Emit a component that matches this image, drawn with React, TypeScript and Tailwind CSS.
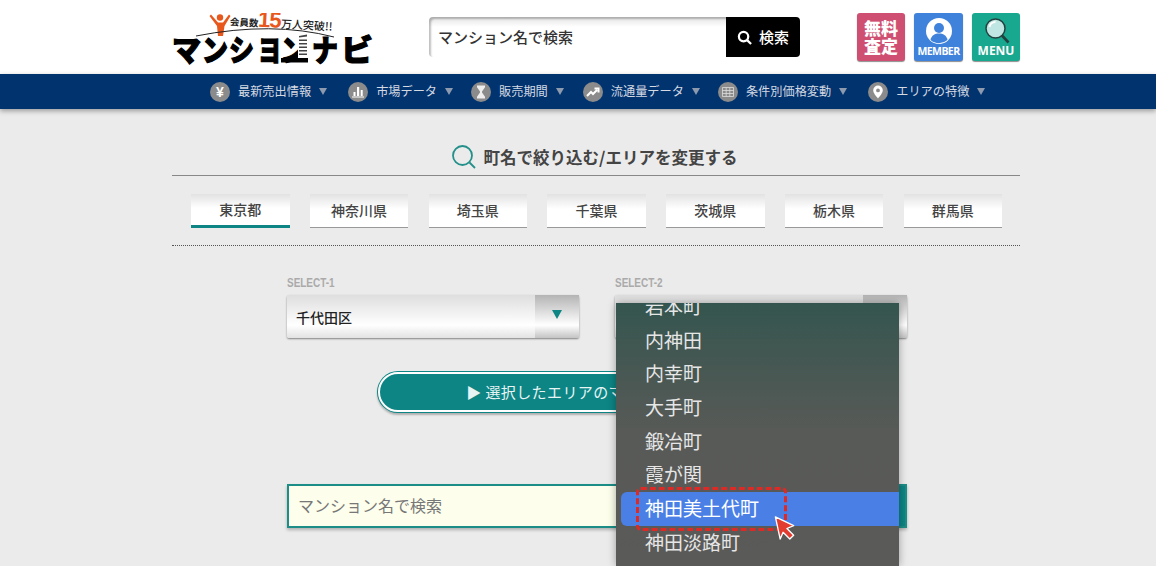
const jp = "font-['Noto_Sans_CJK_JP','Noto_Sans',sans-serif]";

const Glyph = ({ children }: { children: React.ReactNode }) => (
  <svg viewBox="0 0 20 20" className="size-5 shrink-0 rounded-full bg-[#8b8b8b]">
    {children}
  </svg>
);

const navItems = [
  {
    label: "最新売出情報",
    gap: "mr-[21px]",
    icon: (
      <text x="10" y="15" textAnchor="middle" fontSize="14" fontWeight="700" fill="#fff" fontFamily="Liberation Sans">
        ¥
      </text>
    ),
  },
  {
    label: "市場データ",
    gap: "mr-[18px]",
    icon: <path d="M4 14.500h12v1H4zM5.500 10h2v4h-2zM9 5h2.200v9H9zM12.700 8h2v6h-2z" fill="#fff" />,
  },
  {
    label: "販売期間",
    gap: "mr-[19px]",
    icon: <path d="M6 3.500h8v1.700l-3 4.300v1l3 4.300v1.700H6v-1.700l3-4.300v-1l-3-4.300z" fill="#eee" />,
  },
  {
    label: "流通量データ",
    gap: "mr-[18px]",
    icon: <path d="M4 14l4-4 2 2 4-4M11.500 6.500H15.500V10.500" stroke="#fff" strokeWidth="2" fill="none" />,
  },
  {
    label: "条件別価格変動",
    gap: "mr-[21px]",
    icon: (
      <path
        d="M4.500 5.500h11v9h-11zM4.500 8.500h11M4.500 11.500h11M8.200 5.500v9M11.800 5.500v9"
        stroke="#ddd"
        strokeWidth="0.8"
        fill="none"
      />
    ),
  },
  {
    label: "エリアの特徴",
    gap: "",
    icon: (
      <path
        fillRule="evenodd"
        d="M10 3.500a4.800 4.800 0 0 1 4.800 4.800c0 3-3.200 6-4.800 8.200-1.600-2.200-4.800-5.200-4.800-8.200A4.800 4.800 0 0 1 10 3.500zm0 3a1.900 1.900 0 1 0 0 3.800 1.900 1.900 0 0 0 0-3.800z"
        fill="#fff"
      />
    ),
  },
];

const prefectures = ["東京都", "神奈川県", "埼玉県", "千葉県", "茨城県", "栃木県", "群馬県"];
const towns = ["岩本町", "内神田", "内幸町", "大手町", "鍛冶町", "霞が関", "神田美土代町", "神田淡路町"];

const logoChars = [
  { c: "マ", x: 0, w: 29 },
  { c: "ン", x: 30, w: 26 },
  { c: "シ", x: 57, w: 25 },
  { c: "ヨ", x: 86, w: 23 },
  { c: "ン", x: 109, w: 26 },
  { c: "ナ", x: 140, w: 26 },
  { c: "ビ", x: 169, w: 32 },
];

function Logo() {
  return (
    <svg viewBox="0 0 201 52" className="h-[52px] w-[201px] shrink-0">
      {/* person */}
      <circle cx="48" cy="4.500" r="3.200" fill="#e8581c" />
      <path d="M39 1.500l7 8 5 0 6-8 1.500 1.500-6 10-1.500 10h-5l-1-10-7.500-10z" fill="#e8581c" />
      <g transform="rotate(3 110 10)">
        <text x="58" y="15" fontSize="9.500" fontWeight="700" fill="#222" fontFamily="Noto Sans CJK JP">
          会員数
        </text>
        <text x="86" y="15" fontSize="22" fontWeight="700" fill="#e8581c" fontFamily="Liberation Sans" letterSpacing="-1">
          15
        </text>
        <text x="109" y="15" fontSize="11" fontWeight="500" fill="#222" fontFamily="Noto Sans CJK JP">
          万人突破!!
        </text>
      </g>
      <path d="M24 23Q100 8 162 24" stroke="#222" strokeWidth="1" fill="none" />
      {logoChars.map((l, i) => (
        <text
          key={i}
          x={l.x}
          y="48"
          fontSize="30"
          fontWeight="900"
          fill="#000"
          stroke="#000"
          strokeWidth="1.200"
          fontFamily="Noto Sans CJK JP"
          textLength={l.w}
          lengthAdjust="spacingAndGlyphs"
        >
          {l.c}
        </text>
      ))}
      {/* building in the last ン */}
      <path d="M126 22h10v28h-10z" fill="#fff" />
      <path
        d="M127 23l8-1.500v2l-8 1zM127 26.500h8v1.500h-8zM127 30h8v1.500h-8zM127 33.500h8v1.500h-8zM127 37h8v1.500h-8zM127 40.500h8v1.500h-8z"
        fill="#444"
      />
      <path d="M109 45h27v4.500h-27z" fill="#000" />
    </svg>
  );
}

function Select({ value }: { value: string }) {
  return (
    <div className="flex h-[43px] w-[292px] items-stretch rounded-[2px] bg-linear-to-b from-[#dedede] via-[#ffffff] via-70% to-[#e2e2e2] shadow-[0_1px_2px_rgba(0,0,0,0.45)]">
      <div className="flex-1 pl-[9px] pt-[10px] text-[14px] leading-[24px] font-medium text-[#222]">{value}</div>
      <div className="flex w-[44px] items-center justify-center bg-linear-to-b from-[#b4b4b4] via-[#ffffff] via-70% to-[#c4c4c4]">
        <div className="-mt-[4px] size-0 border-x-[5px] border-t-[9px] border-x-transparent border-t-[#0c8584]" />
      </div>
    </div>
  );
}

export default function App() {
  return (
    <div className={`relative h-[566px] w-[1156px] overflow-hidden bg-[#ebebeb] ${jp}`}>
      <header className="h-[74px] bg-white">
        <div className="ml-[172px] flex h-full w-[848px] items-start">
          <div className="mt-[13px]">
            <Logo />
          </div>
          <div className="mt-[17px] ml-[56px] flex h-[40px] w-[371px]">
            <div className="flex w-[297px] items-center rounded-l-[4px] bg-linear-to-b from-[#e4e4e4] to-white to-25% pl-[9px] text-[15px] font-medium text-[#333] shadow-[inset_2px_2px_2px_rgba(0,0,0,0.25)]">
              マンション名で検索
            </div>
            <div className="flex flex-1 items-center justify-center gap-[7px] rounded-r-[4px] bg-black text-[15px] font-medium text-white">
              <svg viewBox="0 0 16 16" className="size-[15px]" fill="none" stroke="#fff" strokeWidth="2.400">
                <circle cx="7" cy="7" r="5" />
                <path d="M10.500 10.500L15 15" />
              </svg>
              検索
            </div>
          </div>
          <div className="mt-[13px] ml-[57px] flex h-[48px] gap-[9px]">
            <div className="flex w-[48px] flex-col items-center justify-center rounded-[3px] bg-[#cf4f72] text-[17px] leading-[18px] font-black text-white shadow-[0_1px_1px_rgba(0,0,0,0.45)]">
              <span>無料</span>
              <span>査定</span>
            </div>
            <div className="flex w-[49px] flex-col items-center rounded-[3px] bg-[#3f82dc] pt-[5px] text-white shadow-[0_1px_1px_rgba(0,0,0,0.45)]">
              <svg viewBox="0 0 26 26" className="size-[26px]">
                <circle cx="13" cy="13" r="13" fill="#fff" />
                <circle cx="13" cy="10" r="5" fill="#3f82dc" />
                <path d="M4.500 22c1-5 4.500-6.500 8.500-6.500s7.500 1.500 8.500 6.500a13 13 0 0 1-17 0z" fill="#3f82dc" />
              </svg>
              <span className="mt-[1px] font-['Open_Sans',sans-serif] text-[10.500px] leading-[12px] font-bold tracking-[-0.6px]">
                MEMBER
              </span>
            </div>
            <div className="flex w-[48px] flex-col items-center rounded-[3px] bg-[#18a88f] pt-[4px] text-white shadow-[0_1px_1px_rgba(0,0,0,0.45)]">
              <svg viewBox="0 0 26 27" className="size-[27px]">
                <circle cx="12" cy="11.500" r="9.500" fill="#bfe6e2" stroke="#23413f" strokeWidth="1.500" />
                <path d="M6 10a6 6 0 0 1 6-5" stroke="#fff" strokeWidth="2" fill="none" />
                <path d="M18.500 18.500L25 25.500" stroke="#23413f" strokeWidth="2.600" />
              </svg>
              <span className="font-['Open_Sans',sans-serif] text-[12px] leading-[14px] font-bold">MENU</span>
            </div>
          </div>
        </div>
      </header>

      <nav className="h-[35px] bg-[#01336f] shadow-[0_2px_5px_rgba(0,0,0,0.35)]">
        <div className="ml-[172px] flex h-full w-[848px] items-center pl-[38px] text-[12.200px] text-[#d4d9e2]">
          {navItems.map((item) => (
            <div key={item.label} className={`flex items-center ${item.gap}`}>
              <Glyph>{item.icon}</Glyph>
              <span className="ml-[8px] leading-none">{item.label}</span>
              <div className="ml-[8px] size-0 border-x-[4px] border-t-[7px] border-x-transparent border-t-[#8e9aae]" />
            </div>
          ))}
        </div>
      </nav>

      <main className="ml-[172px] w-[848px]">
        <div className="flex h-[67px] items-end justify-center gap-[8px] border-b border-[#888] pr-[3px] pb-[6px]">
          <svg viewBox="0 0 24 24" className="size-[24px]" fill="none" stroke="#23908a" strokeWidth="1.800">
            <circle cx="10.500" cy="10.500" r="9.500" />
            <path d="M17.500 17.500L23 23" />
          </svg>
          <h1 className="text-[16.500px] leading-[24px] font-bold text-[#444]">町名で絞り込む/エリアを変更する</h1>
        </div>

        <div className="flex h-[70px] justify-between border-b border-dotted border-[#555] pt-[18px] pr-[18px] pl-[19px]">
          {prefectures.map((p, i) => (
            <div
              key={p}
              className={`flex h-[34px] w-[98.500px] items-center justify-center bg-linear-to-b from-[#e2e2e2] to-white to-45% text-[14px] font-medium text-[#444] ${
                i === 0 ? "border-b-[3px] border-[#0c8584]" : "border-b border-[#999]"
              }`}
            >
              {p}
            </div>
          ))}
        </div>

        <div className="mx-[115px] mt-[30px] flex w-[620px] justify-between">
          {["SELECT-1", "SELECT-2"].map((label, i) => (
            <div key={label}>
              <div className="h-[19px] origin-left scale-x-[0.83] font-['Liberation_Sans',sans-serif] text-[12px] leading-[14px] font-bold text-[#aaa]">
                {label}
              </div>
              <Select value={i === 0 ? "千代田区" : ""} />
            </div>
          ))}
        </div>

        <div className="mx-[206px] mt-[34px] flex h-[40px] items-center justify-center rounded-full border-2 border-white bg-[#0c8584] pl-[6px] text-[15px] tracking-[0.4px] text-[#e8f4f4] shadow-[0_0_0_1px_#0c8584,0_2px_2px_1px_rgba(0,0,0,0.25)]">
          ▶ 選択したエリアのマンションを検索
        </div>

        <div className="mx-[115px] mt-[72px] flex h-[44px] w-[620px] border-2 border-[#1c8d87] bg-[#fdfeec] shadow-[0_2px_3px_rgba(0,0,0,0.25)]">
          <div className="flex-1 pl-[9px] text-[16px] leading-[38px] text-[#777]">マンション名で検索</div>
          <div className="w-[60px] bg-[#0c8584]" />
        </div>
      </main>

      {/* open select menu */}
      <div className="absolute top-[303px] left-[616px] h-[263px] w-[283px] overflow-hidden bg-linear-to-b from-[#34554f] via-[#585a57] via-50% to-[#5a5a58] text-[19px] text-[#e6e6e6] shadow-[0_0_8px_rgba(0,0,0,0.35)]">
        <div className="-mt-[13px] flex flex-col">
          {towns.map((t) => (
            <div
              key={t}
              className={`ml-[5px] h-[33.700px] rounded-l-[6px] pl-[24px] leading-[31px] ${
                t === "神田美土代町" ? "bg-[#4a7fe6] text-white" : ""
              }`}
            >
              {t}
            </div>
          ))}
        </div>
      </div>

      {/* annotation */}
      <div className="absolute top-[487px] left-[636px] h-[44px] w-[151px] rounded-[5px] border-[3px] border-dashed border-[#dc2a26]" />
      <svg viewBox="0 0 22 26" className="absolute top-[516px] left-[774px] h-[25px] w-[22px]">
        <path
          d="M1 1l19 9-7 3 7 7-4 4-7-7-3 7z"
          fill="#e23b30"
          stroke="#fff"
          strokeWidth="1.400"
          strokeLinejoin="round"
        />
      </svg>
    </div>
  );
}
